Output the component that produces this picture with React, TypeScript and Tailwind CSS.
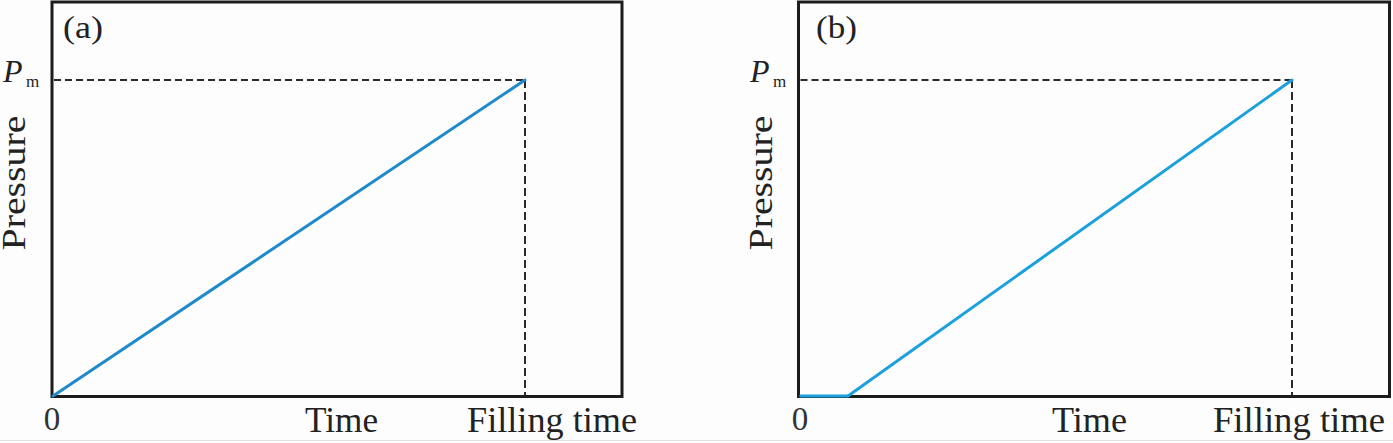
import React from "react";

const serif = '"Liberation Serif", "Times New Roman", Times, serif';

type PanelProps = {
  width: number;
  label: string;
  labelX: number;
  labelLen: number;
  boxLeft: number;
  boxRight: number;
  peakX: number;
  flatEnd?: number;
  lineColor: string;
  pX: number;
  pressureX: number;
  zeroX: number;
  timeX: number;
  timeLen: number;
  fillX: number;
  fillLen: number;
};

function Panel(p: PanelProps) {
  const top = 2;
  const bottom = 396.5;
  const peakY = 80;
  const startX = p.flatEnd ?? p.boxLeft + 1;
  return (
    <svg
      width={p.width}
      height={440}
      viewBox={`0 0 ${p.width} 440`}
      className="block shrink-0 font-['Liberation_Serif',serif]"
    >
      {/* dashed guides */}
      <line
        x1={p.boxLeft + 2}
        y1={peakY}
        x2={p.peakX}
        y2={peakY}
        stroke="#2a2a2a"
        strokeWidth={2}
        strokeDasharray="7 4"
      />
      <line
        x1={p.peakX}
        y1={peakY}
        x2={p.peakX}
        y2={bottom}
        stroke="#2a2a2a"
        strokeWidth={2}
        strokeDasharray="8 4"
      />
      {/* box */}
      <rect
        x={p.boxLeft}
        y={top}
        width={p.boxRight - p.boxLeft}
        height={bottom - top}
        fill="none"
        stroke="#1c1c1c"
        strokeWidth={3}
      />
      {/* data line */}
      {p.flatEnd !== undefined && (
        <line
          x1={p.boxLeft + 1}
          y1={bottom - 0.5}
          x2={p.flatEnd}
          y2={bottom - 0.5}
          stroke={p.lineColor}
          strokeWidth={3}
        />
      )}
      <line
        x1={startX}
        y1={bottom - 0.5}
        x2={p.peakX}
        y2={peakY}
        stroke={p.lineColor}
        strokeWidth={3}
        strokeLinecap="round"
      />
      {/* panel label */}
      <text
        x={p.labelX}
        y={38}
        fontSize={31}
        fill="#222"
        fontFamily={serif}
        textLength={p.labelLen}
        lengthAdjust="spacingAndGlyphs"
      >
        {p.label}
      </text>
      {/* Pm */}
      <text x={p.pX} y={82} fontSize={32} fontStyle="italic" fill="#222" fontFamily={serif}>
        P
      </text>
      <text x={p.pX + 23} y={87} fontSize={17} fill="#222" fontFamily={serif}>
        m
      </text>
      {/* Pressure */}
      <text
        x={0}
        y={0}
        fontSize={33}
        fill="#222"
        fontFamily={serif}
        textAnchor="middle"
        textLength={135}
        lengthAdjust="spacingAndGlyphs"
        transform={`translate(${p.pressureX} 183) rotate(-90)`}
      >
        Pressure
      </text>
      {/* x axis labels */}
      <text x={p.zeroX} y={430} fontSize={33} fill="#333" textAnchor="middle" fontFamily={serif}>
        0
      </text>
      <text
        x={p.timeX}
        y={432}
        fontSize={35}
        fill="#222"
        fontFamily={serif}
        textLength={p.timeLen}
        lengthAdjust="spacingAndGlyphs"
      >
        Time
      </text>
      <text
        x={p.fillX}
        y={432}
        fontSize={35}
        fill="#222"
        fontFamily={serif}
        textLength={p.fillLen}
        lengthAdjust="spacingAndGlyphs"
      >
        Filling time
      </text>
    </svg>
  );
}

export default function App() {
  return (
    <div className="w-[1393px] h-[443px] bg-[#fdfdfd] overflow-hidden">
      <div className="flex h-[441px] border-b border-[#e4e4e4]">
        <Panel
          width={700}
          label="(a)"
          labelX={63}
          labelLen={40}
          boxLeft={52}
          boxRight={622}
          peakX={525}
          lineColor="#1f8acb"
          pX={3}
          pressureX={25}
          zeroX={52}
          timeX={305}
          timeLen={73}
          fillX={467}
          fillLen={170}
        />
        <Panel
          width={693}
          label="(b)"
          labelX={116}
          labelLen={41}
          boxLeft={98.5}
          boxRight={689.5}
          peakX={592}
          flatEnd={148}
          lineColor="#1aa0dd"
          pX={50}
          pressureX={72}
          zeroX={100}
          timeX={352}
          timeLen={75}
          fillX={513}
          fillLen={172}
        />
      </div>
    </div>
  );
}
